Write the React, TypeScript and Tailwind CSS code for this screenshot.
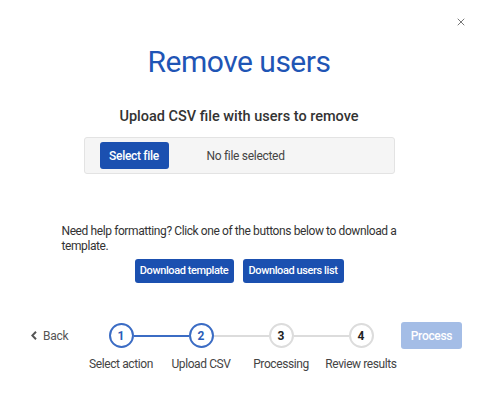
import { X } from "lucide-react";

const steps = [
  { n: 1, label: "Select action", active: true, left: "", right: "bg-[#3b6cc4]" },
  { n: 2, label: "Upload CSV", active: true, left: "bg-[#3b6cc4]", right: "bg-[#dcdcdc]" },
  { n: 3, label: "Processing", active: false, left: "bg-[#dcdcdc]", right: "bg-[#dcdcdc]" },
  { n: 4, label: "Review results", active: false, left: "bg-[#dcdcdc]", right: "" },
];

export default function App() {
  return (
    <div className="w-[478px] h-[416px] bg-white text-[#333] font-['Roboto',sans-serif] flex flex-col items-center">
      <div className="w-full h-[44px] flex justify-end items-start pt-[16px] pr-[11px]">
        <X className="w-[12px] h-[12px] text-[#777]" strokeWidth={2} />
      </div>

      <h1 className="text-[30px] leading-[36px] tracking-[-0.5px] text-[#1f55b5] font-normal">Remove users</h1>

      <h2 className="mt-[27px] text-[14.5px] leading-[20px] font-medium text-[#333]">
        Upload CSV file with users to remove
      </h2>

      <div className="mt-[10px] w-[311px] h-[37px] rounded-[3px] border border-[#e3e3e3] bg-[#f5f5f5] flex items-center pl-[15px]">
        <button className="h-[27px] w-[69px] rounded-[3px] bg-[#1b50b0] text-white text-[12px] font-medium tracking-[-0.3px]">
          Select file
        </button>
        <span className="ml-[38px] text-[12px] tracking-[-0.3px] text-[#444]">No file selected</span>
      </div>

      <p className="mt-[50px] w-[355px] text-[12px] leading-[15px] tracking-[-0.4px] text-[#333] whitespace-nowrap">
        Need help formatting? Click one of the buttons below to download a
        <br />
        template.
      </p>

      <div className="mt-[5px] flex gap-[9px]">
        <button className="h-[24px] w-[99px] rounded-[3px] bg-[#1b50b0] text-white text-[11px] font-medium tracking-[-0.4px]">
          Download template
        </button>
        <button className="h-[24px] w-[101px] rounded-[3px] bg-[#1b50b0] text-white text-[11px] font-medium tracking-[-0.4px]">
          Download users list
        </button>
      </div>

      <div className="mt-[39px] w-full flex items-start pl-[31px]">
        <div className="w-[50px] h-[27px] flex items-center gap-[6px] text-[12px] tracking-[-0.3px] text-[#555]">
          <svg width="6" height="9" viewBox="0 0 6 9" fill="none">
            <polyline points="5,0.8 1.3,4.5 5,8.2" stroke="#555" strokeWidth="2" />
          </svg>
          <span>Back</span>
        </div>
        <div className="flex">
          {steps.map((s) => (
            <div key={s.n} className="w-[80px] flex flex-col items-center">
              <div className="w-full h-[27px] flex items-center">
                <div className={`flex-1 h-[2px] ${s.left}`} />
                <div
                  className={`w-[25px] h-[25px] rounded-full border-2 bg-white flex items-center justify-center text-[12px] font-bold ${
                    s.active ? "border-[#3b6cc4] text-[#2a5cb8]" : "border-[#dcdcdc] text-[#222]"
                  }`}
                >
                  {s.n}
                </div>
                <div className={`flex-1 h-[2px] ${s.right}`} />
              </div>
              <span className="mt-[8px] text-[12px] leading-[15px] tracking-[-0.4px] text-[#444] whitespace-nowrap">
                {s.label}
              </span>
            </div>
          ))}
        </div>
        <button className="h-[27px] w-[61px] rounded-[3px] bg-[#a4bde6] text-white text-[12px] font-medium tracking-[-0.3px]">
          Process
        </button>
      </div>
    </div>
  );
}
